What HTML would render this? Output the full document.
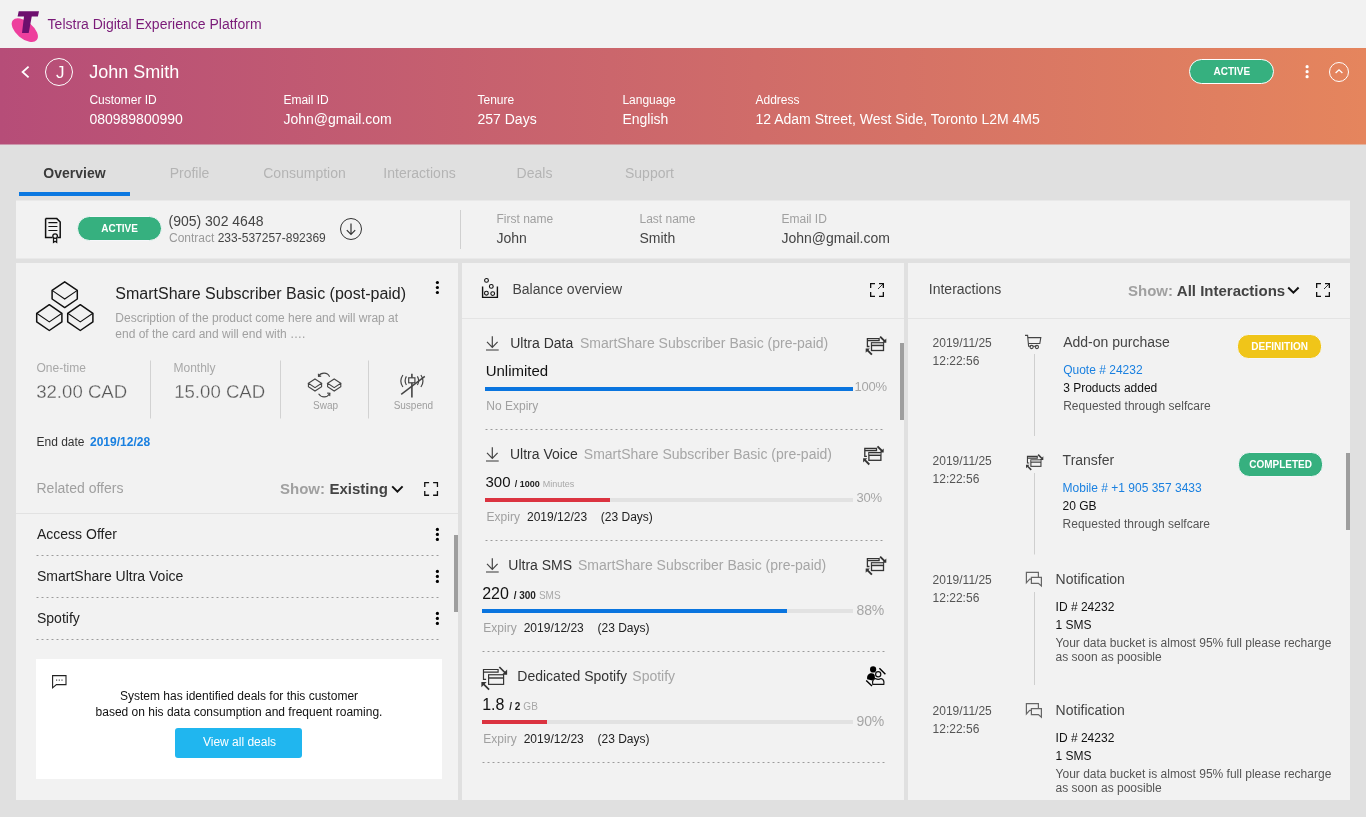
<!DOCTYPE html>
<html lang="en"><head><meta charset="utf-8"><title>Telstra Digital Experience Platform</title>
<style>
html,body{margin:0;padding:0;}
body{width:1366px;height:817px;overflow:hidden;background:#e0e0e0;font-family:"Liberation Sans",Arial,Helvetica,sans-serif;}
#app{position:relative;width:1366px;height:817px;overflow:hidden;will-change:transform;}
.t{position:absolute;white-space:nowrap;line-height:1;}
.r{position:absolute;box-sizing:border-box;}
svg.r{overflow:visible;}
</style></head><body><div id="app">
<div class="r" style="left:0px;top:0px;width:1366px;height:48px;background:#f2f2f2;"></div>
<div class="r" style="left:0px;top:48px;width:1366px;height:96px;background:linear-gradient(90deg,#b64d78 0%,#e5855d 100%);"></div>
<div class="r" style="left:0px;top:144px;width:1366px;height:1px;background:linear-gradient(90deg,#b64d78 0%,#e5855d 100%);opacity:.5;"></div>
<svg class="r" style="left:10px;top:8px;" width="32" height="36" viewBox="0 0 32 36" fill="none"><g transform="translate(0.7 0.2)"><ellipse cx="14.1" cy="22.0" rx="15.5" ry="8.5" transform="rotate(39.7 14.1 22.0)" fill="#ee3f9d"/><path d="M8 3H28.3L27.2 8.4H21.05L18 24.8H11.3L13.3 8.4H6.9Z" fill="#6d0f6e"/></g></svg>
<div class="t" style="top:16.95px;font-size:14px;color:#7a1a78;left:47.6px;">Telstra Digital Experience Platform</div>
<svg class="r" style="left:20px;top:65px;" width="12" height="14" viewBox="0 0 12 14" fill="none"><g transform="translate(0 0)"><path d="M8.6 1.6L2.6 7L8.6 12.4" stroke="#fff" stroke-width="1.8"/></g></svg>
<div class="r" style="left:45px;top:58px;width:28px;height:28px;border:1px solid #fff;border-radius:50%;"></div>
<div class="t" style="top:64.00px;font-size:17px;color:#fff;left:-239.7px;width:600px;text-align:center;">J</div>
<div class="t" style="top:62.66px;font-size:18px;color:#fff;left:89.2px;">John Smith</div>
<div class="t" style="top:94.04px;font-size:12px;color:#fff;left:89.4px;">Customer ID</div>
<div class="t" style="top:112.05px;font-size:14px;color:#fff;left:89.4px;">080989800990</div>
<div class="t" style="top:94.04px;font-size:12px;color:#fff;left:283.4px;">Email ID</div>
<div class="t" style="top:112.05px;font-size:14px;color:#fff;left:283.4px;">John@gmail.com</div>
<div class="t" style="top:94.04px;font-size:12px;color:#fff;left:477.5px;">Tenure</div>
<div class="t" style="top:112.05px;font-size:14px;color:#fff;left:477.5px;">257 Days</div>
<div class="t" style="top:94.04px;font-size:12px;color:#fff;left:622.4px;">Language</div>
<div class="t" style="top:112.05px;font-size:14px;color:#fff;left:622.4px;">English</div>
<div class="t" style="top:94.04px;font-size:12px;color:#fff;left:755.5px;">Address</div>
<div class="t" style="top:112.05px;font-size:14px;color:#fff;left:755.5px;">12 Adam Street, West Side, Toronto L2M 4M5</div>
<div class="r badge" style="left:1189px;top:59px;width:85px;height:25px;background:#36b07f;border:1px solid #fff;border-radius:13px;"></div>
<div class="t" style="top:66.94px;font-size:10px;color:#fff;font-weight:700;left:931.8px;width:600px;text-align:center;">ACTIVE</div>
<svg class="r" style="left:1303px;top:62px;" width="8" height="18" viewBox="0 0 8 18" fill="none"><g transform="translate(0.1 0.7)"><circle cx="4" cy="4" r="1.6" fill="#fff"/><circle cx="4" cy="9" r="1.6" fill="#fff"/><circle cx="4" cy="14" r="1.6" fill="#fff"/></g></svg>
<div class="r" style="left:1329px;top:62px;width:20px;height:20px;border:1.6px solid #fff;border-radius:50%;"></div>
<svg class="r" style="left:1334px;top:68px;" width="10" height="7" viewBox="0 0 10 7" fill="none"><g transform="translate(0 0)"><path d="M1.6 5L5 1.8L8.4 5" stroke="#fff" stroke-width="1.3"/></g></svg>
<div class="t" style="top:166.35px;font-size:14px;color:#3a3a3a;font-weight:700;left:-225.5px;width:600px;text-align:center;">Overview</div>
<div class="t" style="top:166.35px;font-size:14px;color:#b4b4b4;left:-110.5px;width:600px;text-align:center;">Profile</div>
<div class="t" style="top:166.35px;font-size:14px;color:#b4b4b4;left:4.5px;width:600px;text-align:center;">Consumption</div>
<div class="t" style="top:166.35px;font-size:14px;color:#b4b4b4;left:119.5px;width:600px;text-align:center;">Interactions</div>
<div class="t" style="top:166.35px;font-size:14px;color:#b4b4b4;left:234.5px;width:600px;text-align:center;">Deals</div>
<div class="t" style="top:166.35px;font-size:14px;color:#b4b4b4;left:349.5px;width:600px;text-align:center;">Support</div>
<div class="r" style="left:19px;top:192px;width:111px;height:4px;background:#0b78e1;"></div>
<div class="r" style="left:16px;top:201px;width:1334px;height:57px;background:#f2f2f2;"></div>
<div class="r" style="left:16px;top:200px;width:1334px;height:1px;background:#e9e9e9;"></div>
<div class="r" style="left:16px;top:258px;width:1334px;height:1px;background:#e9e9e9;"></div>
<svg class="r" style="left:43px;top:216px;" width="20" height="28" viewBox="0 0 20 28" fill="none"><g transform="translate(0 0)"><path d="M2.6 2.6H13.8L17.2 6V21.6H14.6 M9.6 21.6H2.6V2.6" stroke="#111" stroke-width="1.5"/><path d="M5.4 6.6H14.4 M5.4 10.5H14.4 M5.4 14.5H14.4" stroke="#111" stroke-width="1.1"/><circle cx="12.1" cy="20.1" r="2.3" stroke="#111" stroke-width="1.3" fill="#f2f2f2"/><path d="M10.5 22V26.4L12.1 25.2L13.7 26.4V22" stroke="#111" stroke-width="1.2"/></g></svg>
<div class="r" style="left:77px;top:216px;width:85px;height:25px;background:#36b07f;border:1px solid #f6f7fa;border-radius:12.5px;"></div>
<div class="t" style="top:223.63px;font-size:10px;color:#fff;font-weight:700;left:-180.4px;width:600px;text-align:center;">ACTIVE</div>
<div class="t" style="top:214.35px;font-size:14px;color:#444;left:168.5px;">(905) 302 4648</div>
<div class="t" style="top:232.04px;font-size:12px;color:#999;left:169px;">Contract <span style="color:#444">233-537257-892369</span></div>
<div class="r" style="left:340px;top:218px;width:22px;height:22px;border:1.2px solid #333;border-radius:50%;"></div>
<svg class="r" style="left:345px;top:222px;" width="12" height="13" viewBox="0 0 12 13" fill="none"><g transform="translate(0 0.4)"><path d="M6 1V12 M1.8 7.8L6 12L10.2 7.8" stroke="#333" stroke-width="1.2"/></g></svg>
<div class="r" style="left:460px;top:210px;width:1px;height:38.5px;background:#d0d0d0;"></div>
<div class="t" style="top:213.44px;font-size:12px;color:#a0a0a0;left:496.5px;">First name</div>
<div class="t" style="top:230.75px;font-size:14px;color:#444;left:496.5px;">John</div>
<div class="t" style="top:213.44px;font-size:12px;color:#a0a0a0;left:639.5px;">Last name</div>
<div class="t" style="top:230.75px;font-size:14px;color:#444;left:639.5px;">Smith</div>
<div class="t" style="top:213.44px;font-size:12px;color:#a0a0a0;left:781.5px;">Email ID</div>
<div class="t" style="top:230.75px;font-size:14px;color:#444;left:781.5px;">John@gmail.com</div>
<div class="r" style="left:16px;top:263px;width:442px;height:537px;background:#f2f2f2;"></div>
<div class="r" style="left:462px;top:263px;width:442px;height:537px;background:#f2f2f2;"></div>
<div class="r" style="left:908px;top:263px;width:442px;height:537px;background:#f2f2f2;"></div>
<svg class="r" style="left:30px;top:276px;" width="70" height="60" viewBox="0 0 70 60" fill="none"><g transform="translate(0 0)"><g stroke="#111" stroke-width="1.5" stroke-linejoin="miter"><path d="M22.1 14.4L34.7 5.800000000000001L47.300000000000004 14.4V23.0L34.7 31.6L22.1 23.0Z" stroke-linejoin="round"/><path d="M22.1 14.4L34.7 23.0L47.300000000000004 14.4" stroke-width="1.1"/><path d="M6.700000000000001 37.3L19.3 28.699999999999996L31.9 37.3V45.9L19.3 54.5L6.700000000000001 45.9Z" stroke-linejoin="round"/><path d="M6.700000000000001 37.3L19.3 45.9L31.9 37.3" stroke-width="1.1"/><path d="M37.699999999999996 37.3L50.3 28.699999999999996L62.9 37.3V45.9L50.3 54.5L37.699999999999996 45.9Z" stroke-linejoin="round"/><path d="M37.699999999999996 37.3L50.3 45.9L62.9 37.3" stroke-width="1.1"/></g></g></svg>
<div class="t" style="top:285.66px;font-size:16px;color:#222;left:115.3px;">SmartShare Subscriber Basic (post-paid)</div>
<div class="t" style="top:311.84px;font-size:12px;color:#a0a0a0;left:115.3px;">Description of the product come here and will wrap at</div>
<div class="t" style="top:327.84px;font-size:12px;color:#a0a0a0;left:115.3px;">end of the card and will end with ….</div>
<svg class="r" style="left:433px;top:278px;" width="8" height="18" viewBox="0 0 8 18" fill="none"><g transform="translate(0.4 0.5)"><circle cx="4" cy="4" r="1.6" fill="#000"/><circle cx="4" cy="9" r="1.6" fill="#000"/><circle cx="4" cy="14" r="1.6" fill="#000"/></g></svg>
<div class="t" style="top:362.44px;font-size:12px;color:#a8a8a8;left:36.5px;">One-time</div>
<div class="t" style="top:383.06px;font-size:18.6px;color:#555;left:36.2px;-webkit-text-stroke:0.3px #f2f2f2;">32.00 CAD</div>
<div class="t" style="top:362.44px;font-size:12px;color:#a8a8a8;left:173.5px;">Monthly</div>
<div class="t" style="top:383.06px;font-size:18.6px;color:#555;left:174.2px;-webkit-text-stroke:0.3px #f2f2f2;">15.00 CAD</div>
<div class="r" style="left:150px;top:361px;width:1px;height:57px;background:#d2d2d2;"></div>
<div class="r" style="left:150px;top:360px;width:1px;height:1px;background:#e2e2e2;"></div>
<div class="r" style="left:150px;top:418px;width:1px;height:1px;background:#e2e2e2;"></div>
<div class="r" style="left:280px;top:361px;width:1px;height:57px;background:#d2d2d2;"></div>
<div class="r" style="left:280px;top:360px;width:1px;height:1px;background:#e2e2e2;"></div>
<div class="r" style="left:280px;top:418px;width:1px;height:1px;background:#e2e2e2;"></div>
<div class="r" style="left:368px;top:361px;width:1px;height:57px;background:#d2d2d2;"></div>
<div class="r" style="left:368px;top:360px;width:1px;height:1px;background:#e2e2e2;"></div>
<div class="r" style="left:368px;top:418px;width:1px;height:1px;background:#e2e2e2;"></div>
<svg class="r" style="left:306px;top:370px;" width="38" height="30" viewBox="0 0 38 30" fill="none"><g transform="translate(0 0.5)"><g stroke="#444" stroke-width="1.1"><path d="M9 8.5L15.6 12.8L9 17.1L2.4000000000000004 12.8Z M2.4000000000000004 12.8V16.2L9 20.5L15.6 16.2V12.8"/><path d="M28.2 8.5L34.8 12.8L28.2 17.1L21.6 12.8Z M21.6 12.8V16.2L28.2 20.5L34.8 16.2V12.8"/><path d="M12.6 5.6C15 1.6 21.4 1.4 23.6 6.2"/><path d="M12.4 3.2L12.5 5.9L15.2 5.6"/><path d="M12.6 23.2C15.4 27.6 21.2 27.4 23.8 23"/><path d="M21.2 22.6L23.9 22.8L23.7 25.6"/></g></g></svg>
<div class="t" style="top:400.94px;font-size:10px;color:#9e9e9e;left:25.5px;width:600px;text-align:center;">Swap</div>
<svg class="r" style="left:398px;top:372px;" width="30" height="28" viewBox="0 0 30 28" fill="none"><g transform="translate(0 0)"><g stroke="#444" stroke-width="1.2"><path d="M13.9 1.8V25.6" stroke-width="1.6"/><rect x="10.7" y="5.8" width="6.2" height="5" fill="#f2f2f2"/><path d="M8.4 4.4C6.9 7 6.9 10.4 8.4 13 M4.9 3C2.4 6.6 2.4 11.4 4.9 15"/><path d="M19.4 4.4C20.9 7 20.9 10.4 19.4 13 M22.9 3C25.4 6.6 25.4 11.4 22.9 15"/><path d="M3.2 22.4L26.8 4.4" stroke-width="1.4"/></g></g></svg>
<div class="t" style="top:400.94px;font-size:10px;color:#9e9e9e;left:113.39999999999998px;width:600px;text-align:center;">Suspend</div>
<div class="t" style="top:436.24px;font-size:12px;color:#333;left:36.5px;">End date</div>
<div class="t" style="top:436.24px;font-size:12px;color:#1a80e0;font-weight:700;left:90px;">2019/12/28</div>
<div class="t" style="top:481.35px;font-size:14px;color:#a0a0a0;left:36.5px;">Related offers</div>
<div class="t" style="top:481.30px;font-size:15px;color:#a0a0a0;font-weight:700;left:280px;">Show:</div>
<div class="t" style="top:481.30px;font-size:15px;color:#444;font-weight:700;left:329.5px;">Existing</div>
<svg class="r" style="left:390px;top:484px;" width="14" height="9" viewBox="0 0 14 9" fill="none"><g transform="translate(0.4 0.6)"><path d="M1.8 1.8L7 7L12.2 1.8" stroke="#111" stroke-width="2"/></g></svg>
<svg class="r" style="left:424px;top:481px;" width="14" height="14" viewBox="0 0 14 14" fill="none"><g transform="translate(0.1 0.9)"><path d="M0.65 5V0.65H5 M0.65 9V13.35H5 M9 13.35H13.35V9 M9 0.65H13.35V5" stroke="#111" stroke-width="1.3"/></g></svg>
<div class="r" style="left:16px;top:513px;width:442px;height:1px;background:#e2e2e2;"></div>
<div class="t" style="top:526.95px;font-size:14px;color:#222;left:37px;">Access Offer</div>
<svg class="r" style="left:433px;top:525px;" width="8" height="18" viewBox="0 0 8 18" fill="none"><g transform="translate(0.4 0.4)"><circle cx="4" cy="4" r="1.6" fill="#000"/><circle cx="4" cy="9" r="1.6" fill="#000"/><circle cx="4" cy="14" r="1.6" fill="#000"/></g></svg>
<div class="r" style="left:36px;top:555px;width:403px;height:1px;background:repeating-linear-gradient(90deg,#c9c9c9 0,#c9c9c9 1px,#9b9b9b 1px,#9b9b9b 2px,#c9c9c9 2px,#c9c9c9 3px,transparent 3px,transparent 5px);"></div>
<div class="t" style="top:568.95px;font-size:14px;color:#222;left:37px;">SmartShare Ultra Voice</div>
<svg class="r" style="left:433px;top:567px;" width="8" height="18" viewBox="0 0 8 18" fill="none"><g transform="translate(0.4 0.4)"><circle cx="4" cy="4" r="1.6" fill="#000"/><circle cx="4" cy="9" r="1.6" fill="#000"/><circle cx="4" cy="14" r="1.6" fill="#000"/></g></svg>
<div class="r" style="left:36px;top:597px;width:403px;height:1px;background:repeating-linear-gradient(90deg,#c9c9c9 0,#c9c9c9 1px,#9b9b9b 1px,#9b9b9b 2px,#c9c9c9 2px,#c9c9c9 3px,transparent 3px,transparent 5px);"></div>
<div class="t" style="top:610.95px;font-size:14px;color:#222;left:37px;">Spotify</div>
<svg class="r" style="left:433px;top:609px;" width="8" height="18" viewBox="0 0 8 18" fill="none"><g transform="translate(0.4 0.4)"><circle cx="4" cy="4" r="1.6" fill="#000"/><circle cx="4" cy="9" r="1.6" fill="#000"/><circle cx="4" cy="14" r="1.6" fill="#000"/></g></svg>
<div class="r" style="left:36px;top:639px;width:403px;height:1px;background:repeating-linear-gradient(90deg,#c9c9c9 0,#c9c9c9 1px,#9b9b9b 1px,#9b9b9b 2px,#c9c9c9 2px,#c9c9c9 3px,transparent 3px,transparent 5px);"></div>
<div class="r" style="left:454px;top:535px;width:4px;height:77px;background:#9e9e9e;"></div>
<div class="r" style="left:36px;top:659px;width:406px;height:119.5px;background:#fff;"></div>
<svg class="r" style="left:51px;top:674px;" width="17" height="16" viewBox="0 0 17 16" fill="none"><g transform="translate(0 0)"><path d="M1.6 1.6H15V10.6H5.4L1.6 13.8Z" stroke="#222" stroke-width="1.1"/><path d="M5 6.1H6.2 M7.7 6.1H8.9 M10.4 6.1H11.6" stroke="#222" stroke-width="1"/></g></svg>
<div class="t" style="top:690.44px;font-size:12px;color:#111;left:-61px;width:600px;text-align:center;">System has identified deals for this customer</div>
<div class="t" style="top:705.64px;font-size:12px;color:#111;left:-61px;width:600px;text-align:center;">based on his data consumption and frequent roaming.</div>
<div class="r" style="left:175px;top:728px;width:127px;height:30px;background:#20b6ef;border-radius:3px;"></div>
<div class="t" style="top:736.44px;font-size:12px;color:#fff;left:-60.5px;width:600px;text-align:center;">View all deals</div>
<svg class="r" style="left:480px;top:277px;" width="20" height="23" viewBox="0 0 20 23" fill="none"><g transform="translate(0 0)"><path d="M2.6 9.4V20.4H17.4V9.4" stroke="#111" stroke-width="1.4"/><circle cx="6.5" cy="3.4" r="1.9" stroke="#111" stroke-width="1.1"/><circle cx="11.3" cy="9.4" r="1.9" stroke="#111" stroke-width="1.1"/><circle cx="6.4" cy="16.2" r="1.9" stroke="#111" stroke-width="1.1"/><circle cx="12.7" cy="16.6" r="1.9" stroke="#111" stroke-width="1.1"/></g></svg>
<div class="t" style="top:282.45px;font-size:14px;color:#444;left:512.4px;">Balance overview</div>
<svg class="r" style="left:870px;top:283px;" width="14" height="14" viewBox="0 0 14 14" fill="none"><g transform="translate(0 0)"><path d="M0.65 5V0.65H5 M0.65 9V13.35H5 M9 13.35H13.35V9 M9 0.65H13.35V5" stroke="#111" stroke-width="1.3"/><path d="M13 1L8 6" stroke="#111" stroke-width="0.85"/></g></svg>
<div class="r" style="left:462px;top:318px;width:442px;height:1px;background:#e4e4e4;"></div>
<div class="r" style="left:900px;top:343px;width:4px;height:76.5px;background:#9e9e9e;"></div>
<svg class="r" style="left:486px;top:336px;" width="13" height="15" viewBox="0 0 13 15" fill="none"><g transform="translate(0 0)"><path d="M6.3 0.2V11.2 M1 5.9L6.3 11.3L11.6 5.9" stroke="#444" stroke-width="1.2"/><path d="M0 14H12.7" stroke="#8a8a8a" stroke-width="1.8"/></g></svg>
<svg class="r" style="left:863px;top:335px;overflow:visible;" width="24.0" height="22.0" viewBox="-1 -2 24 22" fill="none"><g transform="translate(0.900 0.800)"><g stroke="#333" stroke-width="1.30"><path d="M4.6 8.7H2.5V0.8H14.2V2.9H2.5"/><rect x="6.6" y="5" width="12" height="7.7"/><path d="M6.6 7.6H18.6" stroke-width="1.60"/></g><rect x="7" y="5.4" width="11.2" height="1.6" fill="#bbb"/><path d="M15.2 -1.2L19.8 3.4" stroke="#333" stroke-width="1.90"/><path d="M21.4 5V0.8L17.2 5Z" fill="#333"/><path d="M7 16.9L2.4 12.3" stroke="#333" stroke-width="1.90"/><path d="M0.8 10.7V14.9L5 10.7Z" fill="#333"/></g></svg>
<div class="t" style="top:336.35px;font-size:14px;color:#333;left:510.2px;">Ultra Data</div>
<div class="t" style="top:336.35px;font-size:14px;color:#a6a6a6;left:580.0px;">SmartShare Subscriber Basic (pre-paid)</div>
<div class="t" style="top:363.00px;font-size:15px;color:#111;left:485.7px;">Unlimited</div>
<div class="r" style="left:485.2px;top:387.2px;width:367.50000000000006px;height:4px;background:#e2e2e2;"></div>
<div class="r" style="left:485.2px;top:387.2px;width:367.50000000000006px;height:4px;background:#0a75df;"></div>
<div class="t" style="top:380.40px;font-size:13px;color:#a6a6a6;letter-spacing:-0.2px;left:854.4px;">100%</div>
<div class="t" style="top:400.04px;font-size:12px;color:#a0a0a0;left:486.3px;">No Expiry</div>
<div class="r" style="left:485px;top:429px;width:398px;height:1px;background:repeating-linear-gradient(90deg,#c9c9c9 0,#c9c9c9 1px,#9b9b9b 1px,#9b9b9b 2px,#c9c9c9 2px,#c9c9c9 3px,transparent 3px,transparent 5px);"></div>
<svg class="r" style="left:486px;top:447px;" width="13" height="15" viewBox="0 0 13 15" fill="none"><g transform="translate(0 0)"><path d="M6.3 0.2V11.2 M1 5.9L6.3 11.3L11.6 5.9" stroke="#444" stroke-width="1.2"/><path d="M0 14H12.7" stroke="#8a8a8a" stroke-width="1.8"/></g></svg>
<svg class="r" style="left:861px;top:445px;overflow:visible;" width="24.0" height="22.0" viewBox="-1 -2 24 22" fill="none"><g transform="translate(0.300 0.600)"><g stroke="#333" stroke-width="1.30"><path d="M4.6 8.7H2.5V0.8H14.2V2.9H2.5"/><rect x="6.6" y="5" width="12" height="7.7"/><path d="M6.6 7.6H18.6" stroke-width="1.60"/></g><rect x="7" y="5.4" width="11.2" height="1.6" fill="#bbb"/><path d="M15.2 -1.2L19.8 3.4" stroke="#333" stroke-width="1.90"/><path d="M21.4 5V0.8L17.2 5Z" fill="#333"/><path d="M7 16.9L2.4 12.3" stroke="#333" stroke-width="1.90"/><path d="M0.8 10.7V14.9L5 10.7Z" fill="#333"/></g></svg>
<div class="t" style="top:447.35px;font-size:14px;color:#333;left:510.0px;">Ultra Voice</div>
<div class="t" style="top:447.35px;font-size:14px;color:#a6a6a6;left:583.8px;">SmartShare Subscriber Basic (pre-paid)</div>
<div class="t" style="top:474.00px;font-size:15px;color:#111;left:485.5px;">300<span style="font-size:9px;font-weight:700;color:#222;margin-left:4.3px">/ 1000</span><span style="font-size:9px;color:#a8a8a8;margin-left:3px">Minutes</span></div>
<div class="r" style="left:485.2px;top:498.2px;width:367.50000000000006px;height:4px;background:#e2e2e2;"></div>
<div class="r" style="left:485.2px;top:498.2px;width:124.80000000000001px;height:4px;background:#db3340;"></div>
<div class="t" style="top:491.40px;font-size:13px;color:#a6a6a6;letter-spacing:-0.2px;left:856.4px;">30%</div>
<div class="t" style="top:510.64px;font-size:12px;color:#a0a0a0;left:486.6px;">Expiry</div>
<div class="t" style="top:510.64px;font-size:12px;color:#222;left:527px;">2019/12/23</div>
<div class="t" style="top:510.64px;font-size:12px;color:#222;left:600.8px;">(23 Days)</div>
<div class="r" style="left:485px;top:540px;width:398px;height:1px;background:repeating-linear-gradient(90deg,#c9c9c9 0,#c9c9c9 1px,#9b9b9b 1px,#9b9b9b 2px,#c9c9c9 2px,#c9c9c9 3px,transparent 3px,transparent 5px);"></div>
<svg class="r" style="left:486px;top:558px;" width="13" height="15" viewBox="0 0 13 15" fill="none"><g transform="translate(0 0)"><path d="M6.3 0.2V11.2 M1 5.9L6.3 11.3L11.6 5.9" stroke="#444" stroke-width="1.2"/><path d="M0 14H12.7" stroke="#8a8a8a" stroke-width="1.8"/></g></svg>
<svg class="r" style="left:863px;top:555px;overflow:visible;" width="24.0" height="22.0" viewBox="-1 -2 24 22" fill="none"><g transform="translate(0.900 0.800)"><g stroke="#333" stroke-width="1.30"><path d="M4.6 8.7H2.5V0.8H14.2V2.9H2.5"/><rect x="6.6" y="5" width="12" height="7.7"/><path d="M6.6 7.6H18.6" stroke-width="1.60"/></g><rect x="7" y="5.4" width="11.2" height="1.6" fill="#bbb"/><path d="M15.2 -1.2L19.8 3.4" stroke="#333" stroke-width="1.90"/><path d="M21.4 5V0.8L17.2 5Z" fill="#333"/><path d="M7 16.9L2.4 12.3" stroke="#333" stroke-width="1.90"/><path d="M0.8 10.7V14.9L5 10.7Z" fill="#333"/></g></svg>
<div class="t" style="top:558.35px;font-size:14px;color:#333;left:508.3px;">Ultra SMS</div>
<div class="t" style="top:558.35px;font-size:14px;color:#a6a6a6;left:578px;">SmartShare Subscriber Basic (pre-paid)</div>
<div class="t" style="top:586.00px;font-size:16px;color:#111;left:482.2px;">220<span style="font-size:10px;font-weight:700;color:#222;margin-left:4.8px">/ 300</span><span style="font-size:10px;color:#a8a8a8;margin-left:3px">SMS</span></div>
<div class="r" style="left:481.9px;top:609.2px;width:370.80000000000007px;height:4px;background:#e2e2e2;"></div>
<div class="r" style="left:481.9px;top:609.2px;width:304.9px;height:4px;background:#0a75df;"></div>
<div class="t" style="top:602.75px;font-size:14px;color:#a6a6a6;letter-spacing:-0.2px;left:856.6px;">88%</div>
<div class="t" style="top:621.64px;font-size:12px;color:#a0a0a0;left:483.3px;">Expiry</div>
<div class="t" style="top:621.64px;font-size:12px;color:#222;left:523.7px;">2019/12/23</div>
<div class="t" style="top:621.64px;font-size:12px;color:#222;left:597.5px;">(23 Days)</div>
<div class="r" style="left:482px;top:651px;width:403px;height:1px;background:repeating-linear-gradient(90deg,#c9c9c9 0,#c9c9c9 1px,#9b9b9b 1px,#9b9b9b 2px,#c9c9c9 2px,#c9c9c9 3px,transparent 3px,transparent 5px);"></div>
<svg class="r" style="left:479px;top:666px;overflow:visible;" width="30.0" height="27.5" viewBox="-1 -2 24 22" fill="none"><g transform="translate(0.080 0.000)"><g stroke="#333" stroke-width="0.94"><path d="M4.6 8.7H2.5V0.8H14.2V2.9H2.5"/><rect x="6.6" y="5" width="12" height="7.7"/><path d="M6.6 7.6H18.6" stroke-width="1.15"/></g><path d="M15.2 -1.2L19.8 3.4" stroke="#333" stroke-width="1.37"/><path d="M21.4 5V0.8L17.2 5Z" fill="#333"/><path d="M7 16.9L2.4 12.3" stroke="#333" stroke-width="1.37"/><path d="M0.8 10.7V14.9L5 10.7Z" fill="#333"/></g></svg>
<div class="t" style="top:669.35px;font-size:14px;color:#333;left:517.3px;">Dedicated Spotify</div>
<div class="t" style="top:669.35px;font-size:14px;color:#a6a6a6;left:632.3px;">Spotify</div>
<div class="t" style="top:697.00px;font-size:16px;color:#111;left:482.2px;">1.8<span style="font-size:10px;font-weight:700;color:#222;margin-left:4.8px">/ 2</span><span style="font-size:10px;color:#a8a8a8;margin-left:3px">GB</span></div>
<div class="r" style="left:481.9px;top:720.2px;width:370.80000000000007px;height:4px;background:#e2e2e2;"></div>
<div class="r" style="left:481.9px;top:720.2px;width:65.10000000000002px;height:4px;background:#db3340;"></div>
<div class="t" style="top:713.75px;font-size:14px;color:#a6a6a6;letter-spacing:-0.2px;left:856.6px;">90%</div>
<div class="t" style="top:732.64px;font-size:12px;color:#a0a0a0;left:483.3px;">Expiry</div>
<div class="t" style="top:732.64px;font-size:12px;color:#222;left:523.7px;">2019/12/23</div>
<div class="t" style="top:732.64px;font-size:12px;color:#222;left:597.5px;">(23 Days)</div>
<div class="r" style="left:482px;top:762px;width:403px;height:1px;background:repeating-linear-gradient(90deg,#c9c9c9 0,#c9c9c9 1px,#9b9b9b 1px,#9b9b9b 2px,#c9c9c9 2px,#c9c9c9 3px,transparent 3px,transparent 5px);"></div>
<svg class="r" style="left:864px;top:664px;" width="24" height="24" viewBox="0 0 24 24" fill="none"><g transform="translate(0 0)"><circle cx="9.1" cy="5.4" r="3.1" fill="#000"/><path d="M3.2 15.2C2.6 11.6 4.6 9 7.6 9.2C9.4 9.2 10.2 10 10.8 11.4C10.6 13 11 14 11.6 14.6C10 15 8.4 16 8.2 16.4Z" fill="#000"/><circle cx="14.2" cy="10.3" r="2.6" stroke="#111" stroke-width="1.2" fill="#f2f2f2"/><path d="M8.8 20.4C8 17 9 15.2 11.4 14.6C13 15.6 15.4 15.6 17 14.6C19.6 15.2 20.4 17 19.8 20.4Z" stroke="#111" stroke-width="1.2" fill="#f2f2f2"/><path d="M15.4 4.2L21.4 10.2 M2.2 16.4L8 22" stroke="#000" stroke-width="1.4"/></g></svg>
<div class="t" style="top:282.45px;font-size:14px;color:#444;left:928.8px;">Interactions</div>
<div class="t" style="top:283.30px;font-size:15px;color:#a0a0a0;font-weight:700;left:1128px;">Show:</div>
<div class="t" style="top:283.30px;font-size:15px;color:#444;font-weight:700;left:1176.8px;">All Interactions</div>
<svg class="r" style="left:1286px;top:285px;" width="14" height="9" viewBox="0 0 14 9" fill="none"><g transform="translate(0.4 0.7)"><path d="M1.8 1.8L7 7L12.2 1.8" stroke="#111" stroke-width="2"/></g></svg>
<svg class="r" style="left:1316px;top:283px;" width="14" height="14" viewBox="0 0 14 14" fill="none"><g transform="translate(0 0)"><path d="M0.65 5V0.65H5 M0.65 9V13.35H5 M9 13.35H13.35V9 M9 0.65H13.35V5" stroke="#111" stroke-width="1.3"/><path d="M13 1L8 6" stroke="#111" stroke-width="0.85"/></g></svg>
<div class="r" style="left:908px;top:318px;width:442px;height:1px;background:#e4e4e4;"></div>
<div class="r" style="left:1346px;top:453px;width:4px;height:77px;background:#9e9e9e;"></div>
<div class="t" style="top:336.64px;font-size:12px;color:#555;left:932.6px;">2019/11/25</div>
<div class="t" style="top:354.64px;font-size:12px;color:#555;left:932.6px;">12:22:56</div>
<svg class="r" style="left:1024px;top:333px;" width="20" height="18" viewBox="0 0 20 18" fill="none"><g transform="translate(0 0)"><g stroke="#444" stroke-width="1.1"><path d="M1 2.4H3.6L4.6 13.2H7 M9 13.2H12.4"/><path d="M3.9 4.6H16.8L15.8 10.5H4.4"/><circle cx="7.6" cy="14" r="1.6"/><circle cx="12.9" cy="14" r="1.6"/></g></g></svg>
<div class="r" style="left:1034px;top:354px;width:1px;height:82px;background:#cfcfcf;"></div>
<div class="t" style="top:334.95px;font-size:14px;color:#444;left:1063.2px;">Add-on purchase</div>
<div class="t" style="top:364.04px;font-size:12px;color:#1a80e0;left:1063.2px;">Quote # 24232</div>
<div class="t" style="top:382.04px;font-size:12px;color:#111;left:1063.2px;">3 Products added</div>
<div class="t" style="top:400.04px;font-size:12px;color:#555;left:1063.2px;">Requested through selfcare</div>
<div class="r" style="left:1237px;top:334px;width:85px;height:25px;background:#f0c519;border:1px solid #f6f7fa;border-radius:11.5px;"></div>
<div class="t" style="top:341.54px;font-size:10px;color:#fff;font-weight:700;left:979.5999999999999px;width:600px;text-align:center;">DEFINITION</div>
<div class="t" style="top:454.64px;font-size:12px;color:#555;left:932.6px;">2019/11/25</div>
<div class="t" style="top:472.64px;font-size:12px;color:#555;left:932.6px;">12:22:56</div>
<svg class="r" style="left:1024px;top:454px;overflow:visible;" width="20.16" height="18.48" viewBox="-1 -2 24 22" fill="none"><g transform="translate(0.595 0.000)"><g stroke="#3c3c3c" stroke-width="1.30"><path d="M4.6 8.7H2.5V0.8H14.2V2.9H2.5"/><rect x="6.6" y="5" width="12" height="7.7"/><path d="M6.6 7.6H18.6" stroke-width="1.60"/></g><rect x="7" y="5.4" width="11.2" height="1.6" fill="#bbb"/><path d="M15.2 -1.2L19.8 3.4" stroke="#3c3c3c" stroke-width="1.90"/><path d="M21.4 5V0.8L17.2 5Z" fill="#3c3c3c"/><path d="M7 16.9L2.4 12.3" stroke="#3c3c3c" stroke-width="1.90"/><path d="M0.8 10.7V14.9L5 10.7Z" fill="#3c3c3c"/></g></svg>
<div class="r" style="left:1034px;top:473px;width:1px;height:81px;background:#cfcfcf;"></div>
<div class="r" style="left:1034px;top:554px;width:1px;height:1px;background:#e1e1e1;"></div>
<div class="t" style="top:452.95px;font-size:14px;color:#444;left:1062.6px;">Transfer</div>
<div class="t" style="top:482.04px;font-size:12px;color:#1a80e0;left:1062.6px;">Mobile # +1 905 357 3433</div>
<div class="t" style="top:500.04px;font-size:12px;color:#111;left:1062.6px;">20 GB</div>
<div class="t" style="top:518.04px;font-size:12px;color:#555;left:1062.6px;">Requested through selfcare</div>
<div class="r" style="left:1238px;top:452px;width:85px;height:25px;background:#36b07f;border:1px solid #f6f7fa;border-radius:11.5px;"></div>
<div class="t" style="top:459.84px;font-size:10px;color:#fff;font-weight:700;left:980.5999999999999px;width:600px;text-align:center;">COMPLETED</div>
<div class="t" style="top:573.84px;font-size:12px;color:#555;left:932.6px;">2019/11/25</div>
<div class="t" style="top:591.84px;font-size:12px;color:#555;left:932.6px;">12:22:56</div>
<svg class="r" style="left:1025px;top:571px;" width="17" height="16" viewBox="0 0 17 16" fill="none"><g transform="translate(0.8 0.8)"><g stroke="#666" stroke-width="1.2" stroke-linejoin="miter"><path d="M5.6 7.4H3.9L0.6 11V0.6H12.6V5.4"/><path d="M5.6 5.6H15.6V14.2L12.6 11.6H5.6Z"/></g></g></svg>
<div class="t" style="top:572.15px;font-size:14px;color:#444;left:1055.6px;">Notification</div>
<div class="t" style="top:601.24px;font-size:12px;color:#111;left:1055.6px;">ID # 24232</div>
<div class="t" style="top:619.24px;font-size:12px;color:#111;left:1055.6px;">1 SMS</div>
<div class="t" style="top:637.04px;font-size:12px;color:#555;left:1055.6px;">Your data bucket is almost 95% full please recharge</div>
<div class="t" style="top:651.04px;font-size:12px;color:#555;left:1055.6px;">as soon as poosible</div>
<div class="t" style="top:705.04px;font-size:12px;color:#555;left:932.6px;">2019/11/25</div>
<div class="t" style="top:723.04px;font-size:12px;color:#555;left:932.6px;">12:22:56</div>
<svg class="r" style="left:1025px;top:703px;" width="17" height="16" viewBox="0 0 17 16" fill="none"><g transform="translate(0.8 0.0)"><g stroke="#666" stroke-width="1.2" stroke-linejoin="miter"><path d="M5.6 7.4H3.9L0.6 11V0.6H12.6V5.4"/><path d="M5.6 5.6H15.6V14.2L12.6 11.6H5.6Z"/></g></g></svg>
<div class="t" style="top:703.35px;font-size:14px;color:#444;left:1055.6px;">Notification</div>
<div class="t" style="top:732.44px;font-size:12px;color:#111;left:1055.6px;">ID # 24232</div>
<div class="t" style="top:750.44px;font-size:12px;color:#111;left:1055.6px;">1 SMS</div>
<div class="t" style="top:768.24px;font-size:12px;color:#555;left:1055.6px;">Your data bucket is almost 95% full please recharge</div>
<div class="t" style="top:782.24px;font-size:12px;color:#555;left:1055.6px;">as soon as poosible</div>
<div class="r" style="left:1034px;top:592px;width:1px;height:93px;background:#cfcfcf;"></div>
</div></body></html>
